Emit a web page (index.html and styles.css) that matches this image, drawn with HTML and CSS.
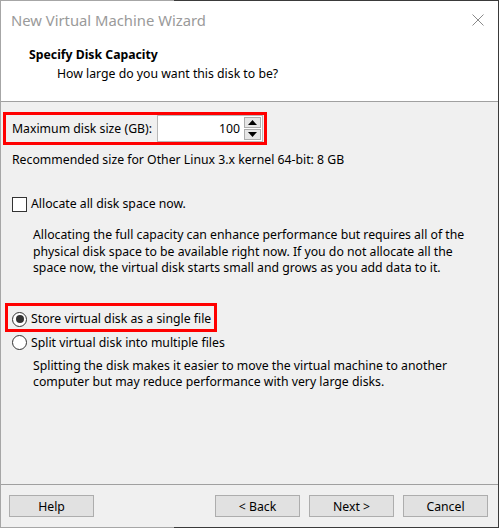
FILE: index.html
```html
<!DOCTYPE html>
<html>
<head>
<meta charset="utf-8">
<link rel="stylesheet" href="styles.css">
</head>
<body>
<div class="window">
  <div class="titlebar">
    <span class="title">New Virtual Machine Wizard</span>
    <svg class="close" width="12" height="12" viewBox="0 0 12 12"><path d="M0.5 0.5L11.5 11.5M11.5 0.5L0.5 11.5" stroke="#8a8a8a" stroke-width="1" fill="none"/></svg>
  </div>
  <div class="header">
    <div class="h-title">Specify Disk Capacity</div>
    <div class="h-sub">How large do you want this disk to be?</div>
  </div>
  <div class="content">
    <div class="hl hl-size">
      <span class="lbl">Maximum disk size (GB):</span>
      <div class="spin">
        <div class="field">100</div>
        <div class="arrows">
          <div class="arr"><svg width="9" height="5" viewBox="0 0 9 5"><path d="M4.5 0L9 5H0Z" fill="#000"/></svg></div>
          <div class="arr"><svg width="9" height="5" viewBox="0 0 9 5"><path d="M0 0H9L4.5 5Z" fill="#000"/></svg></div>
        </div>
      </div>
    </div>
    <div class="rec">Recommended size for Other Linux 3.x kernel 64-bit: 8 GB</div>
    <div class="opt chk-row"><span class="checkbox"></span><span>Allocate all disk space now.</span></div>
    <p class="desc d1">Allocating the full capacity can enhance performance but requires all of the physical disk space to be available right now. If you do not allocate all the space now, the virtual disk starts small and grows as you add data to it.</p>
    <div class="hl hl-radio">
      <div class="opt"><span class="radio on"></span><span>Store virtual disk as a single file</span></div>
    </div>
    <div class="opt r2"><span class="radio"></span><span>Split virtual disk into multiple files</span></div>
    <p class="desc d2">Splitting the disk makes it easier to move the virtual machine to another computer but may reduce performance with very large disks.</p>
  </div>
  <div class="footer">
    <button class="btn">Help</button>
    <div class="spacer"></div>
    <button class="btn">&lt; Back</button>
    <button class="btn">Next &gt;</button>
    <button class="btn">Cancel</button>
  </div>
</div>
</body>
</html>
```
FILE: styles.css
```css
* { box-sizing: border-box; }
html, body { margin: 0; padding: 0; }
body {
  width: 499px;
  height: 528px;
  font-family: "Noto Sans", "Open Sans", sans-serif;
  font-size: 12.25px;
  color: #000;
  background: #f0f0f0;
}
.window {
  width: 499px;
  height: 528px;
  border: 1px solid transparent;
  border-image: linear-gradient(to right, #a6a6a6 174px, #3a3a3a 174px) 1;
  display: flex;
  flex-direction: column;
  background: #f0f0f0;
}
.titlebar {
  height: 38px;
  background: #fff;
  display: flex;
  align-items: center;
  padding-left: 10px;
  padding-right: 14px;
}
.title {
  flex: 1;
  font-size: 14.8px;
  color: #9a9a9a;
}
.close { display: block; margin-top: 0; }
.header {
  background: #fff;
  padding: 8px 0 20px 28px;
  border-bottom: 1px solid #a0a0a0;
  height: 63px;
}
.h-title { font-weight: bold; line-height: 16px; }
.h-sub { line-height: 16px; margin-top: 3px; padding-left: 28px; }
.content {
  flex: 1;
  display: flex;
  flex-direction: column;
  align-items: flex-start;
}
.hl {
  border: 3px solid #f00;
  display: flex;
  align-items: center;
}
.hl-size {
  margin: 10px 0 0 2px;
  height: 33px;
  padding-left: 6px;
  padding-right: 1px;
}
.lbl { line-height: 16px; margin-right: 5px; }
.spin {
  display: flex;
  height: 27px;
  border: 1px solid #b8b8b8;
  background: #fff;
}
.field {
  width: 85px;
  text-align: right;
  line-height: 25px;
  padding-right: 3px;
}
.arrows {
  width: 19px;
  display: flex;
  flex-direction: column;
  gap: 1px;
  padding: 1px;
}
.arr {
  flex: 1;
  background: #e6e6e6;
  border: 1px solid #adadad;
  display: flex;
  align-items: center;
  justify-content: center;
}
.arr svg { display: block; }
.rec { margin: 7px 0 0 11px; line-height: 16px; }
.opt {
  display: flex;
  align-items: center;
  gap: 4px;
  line-height: 16px;
}
.chk-row { margin: 28px 0 0 11px; }
.checkbox {
  width: 15px;
  height: 15px;
  border: 1px solid #333;
  background: #fff;
  flex: none;
}
.desc {
  margin: 0 0 0 32px;
  line-height: 16.5px;
  width: 450px;
}
.d1 { margin-top: 15px; }
.hl-radio {
  margin: 26px 0 0 4px;
  height: 29px;
  padding: 4px 3px 0 4px;
}
.radio {
  width: 15px;
  height: 15px;
  border-radius: 50%;
  border: 1px solid #333;
  background: #fff;
  flex: none;
  position: relative;
}
.radio.on::after {
  content: "";
  position: absolute;
  left: 2.5px;
  top: 2.5px;
  width: 8px;
  height: 8px;
  border-radius: 50%;
  background: #333;
}
.r2 { margin: 3px 0 0 11px; }
.d2 { margin-top: 7px; }
.footer {
  border-top: 1px solid #a0a0a0;
  display: flex;
  padding: 10px 10px 9px 8px;
  gap: 9px;
  height: 43px;
}
.spacer { flex: 1; }
.btn {
  width: 85px;
  height: 22px;
  background: #e1e1e1;
  border: 1px solid #adadad;
  font-family: inherit;
  font-size: 12.25px;
  color: #000;
  padding: 0;
  margin: 0;
}
```
